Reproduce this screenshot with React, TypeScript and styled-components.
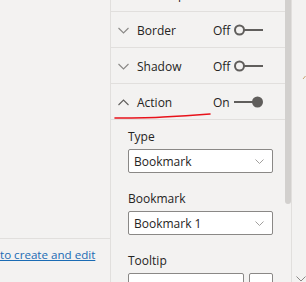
import React from 'react'
import styled, { createGlobalStyle } from 'styled-components'

const GlobalStyle = createGlobalStyle`
  html, body {
    margin: 0;
    padding: 0;
    background: #f3f2f1;
  }
  body {
    font-family: "Open Sans", "Noto Sans", sans-serif;
    color: #252423;
  }
`

const Frame = styled.div`
  width: 306px;
  height: 282px;
  overflow: hidden;
  display: grid;
  grid-template-columns: 110px 1px 174px 6px 1px 14px;
  background: #f3f2f1;
  position: relative;
`
const LeftPane = styled.div`
  display: flex;
  flex-direction: column;
  padding-top: 238px;
`
const Divider = styled.div`
  background: #e1dfdd;
`
const HelpBar = styled.div`
  border-top: 1px solid #e1dfdd;
  padding-top: 3px;
`
const HelpLink = styled.a`
  font-size: 11.6px;
  line-height: 18px;
  color: #1a6bb4;
  text-decoration: underline;
  white-space: nowrap;
`
const Panel = styled.div`
  display: flex;
  flex-direction: column;
  margin-top: -24px;
  position: relative;
`
const Row = styled.div`
  height: 35px;
  border-bottom: 1px solid #e1dfdd;
  display: flex;
  align-items: center;
  padding-left: 7px;
  padding-top: 1px;
  box-sizing: border-box;
  height: 36px;
  font-size: 12px;
`
const Chevron = styled.svg`
  width: 11px;
  height: 7px;
  flex: none;
`
const RowLabel = styled.span`
  margin-left: 8px;
  width: 76px;
  white-space: nowrap;
`
const StateLabel = styled.span`
  width: 21px;
`
const Toggle = styled.svg`
  width: 31px;
  height: 12px;
  flex: none;
`
const Section = styled.div`
  padding: 9px 0 0 17px;
  display: flex;
  flex-direction: column;
`
const FieldLabel = styled.div`
  font-size: 12px;
  line-height: 16px;
  margin-bottom: 4px;
`
const Field = styled.div`
  margin-bottom: 18px;
  display: flex;
  gap: 5px;
`
const Select = styled.div<{ $w: number }>`
  width: ${p => p.$w}px;
  height: 24px;
  box-sizing: border-box;
  border: 1px solid #8a8886;
  border-radius: 2px;
  background: #ffffff;
  display: flex;
  align-items: center;
  justify-content: space-between;
  padding: 0 8px 0 5px;
  font-size: 12px;
`
const SmallChevron = styled.svg`
  width: 9px;
  height: 5px;
`
const ScrollTrack = styled.div`
  display: flex;
  flex-direction: column;
`
const Thumb = styled.div`
  height: 204px;
  background: #d2d0ce;
  border-radius: 0 0 3px 3px;
`
const RightPane = styled.div`
  display: flex;
  flex-direction: column;
  align-items: flex-end;
`
const Marker = styled.svg<{ $top: number }>`
  margin-top: ${p => p.$top}px;
  flex: none;
`
const Annotation = styled.svg`
  position: absolute;
  left: 0;
  top: 0;
  pointer-events: none;
`

const Down = () => (
  <Chevron viewBox="0 0 11 7">
    <path d="M0.5 1 L5.5 6 L10.5 1" fill="none" stroke="#8a8886" strokeWidth="1.1" />
  </Chevron>
)
const Up = () => (
  <Chevron viewBox="0 0 11 7">
    <path d="M0.5 6 L5.5 1 L10.5 6" fill="none" stroke="#605e5c" strokeWidth="1.1" />
  </Chevron>
)

const ToggleSwitch = ({ on }: { on: boolean }) => (
  <Toggle viewBox="0 0 31 12">
    {on ? (
      <>
        <line x1="0" y1="6" x2="22" y2="6" stroke="#605e5c" strokeWidth="2" />
        <circle cx="23.5" cy="6" r="5.5" fill="#605e5c" />
      </>
    ) : (
      <>
        <circle cx="5.5" cy="6" r="4.5" fill="none" stroke="#605e5c" strokeWidth="2" />
        <line x1="10" y1="6" x2="29" y2="6" stroke="#605e5c" strokeWidth="2" />
      </>
    )}
  </Toggle>
)

const rows = [
  { label: 'Lock aspect', on: false, open: false },
  { label: 'Border', on: false, open: false },
  { label: 'Shadow', on: false, open: false },
  { label: 'Action', on: true, open: true },
]

const SelectChevron = () => (
  <SmallChevron viewBox="0 0 9 5">
    <path d="M0.5 0.5 L4.5 4.5 L8.5 0.5" fill="none" stroke="#a19f9d" strokeWidth="1" />
  </SmallChevron>
)

export default function App() {
  return (
    <>
      <GlobalStyle />
      <Frame>
        <LeftPane>
          <HelpBar>
            <HelpLink>to create and edit</HelpLink>
          </HelpBar>
        </LeftPane>
        <Divider />
        <Panel>
          {rows.map(r => (
            <Row key={r.label}>
              {r.open ? <Up /> : <Down />}
              <RowLabel>{r.label}</RowLabel>
              <StateLabel>{r.on ? 'On' : 'Off'}</StateLabel>
              <ToggleSwitch on={r.on} />
            </Row>
          ))}
          <Section>
            <FieldLabel>Type</FieldLabel>
            <Field>
              <Select $w={145}>
                Bookmark
                <SelectChevron />
              </Select>
            </Field>
            <FieldLabel>Bookmark</FieldLabel>
            <Field>
              <Select $w={145}>
                Bookmark 1
                <SelectChevron />
              </Select>
            </Field>
            <FieldLabel>Tooltip</FieldLabel>
            <Field>
              <Select $w={116} />
              <Select $w={24}>
                <svg width="8" height="8" viewBox="0 0 8 8" style={{ marginTop: 6, marginLeft: 4 }}>
                  <path d="M1 4 Q3 1 6 2" fill="none" stroke="#3a7bc8" strokeWidth="1" />
                </svg>
              </Select>
            </Field>
          </Section>
          <Annotation width="174" height="160" viewBox="0 0 174 160">
            <path d="M4 142 C 20 142, 40 142, 52 141 C 70 140, 85 139, 99 138" fill="none" stroke="#e8121a" strokeWidth="1.6" strokeLinecap="round" />
          </Annotation>
        </Panel>
        <ScrollTrack>
          <Thumb />
        </ScrollTrack>
        <Divider />
        <RightPane>
          <Marker $top={75} width="4" height="6" viewBox="0 0 4 6">
            <path d="M3.5 1 L1 4" fill="none" stroke="#c8a070" strokeWidth="1" />
          </Marker>
          <Marker $top={195} width="10" height="6" viewBox="0 0 10 6">
            <path d="M0.5 0.5 L5 5 L9.5 0.5" fill="none" stroke="#8a8886" strokeWidth="1" />
          </Marker>
        </RightPane>
      </Frame>
    </>
  )
}
